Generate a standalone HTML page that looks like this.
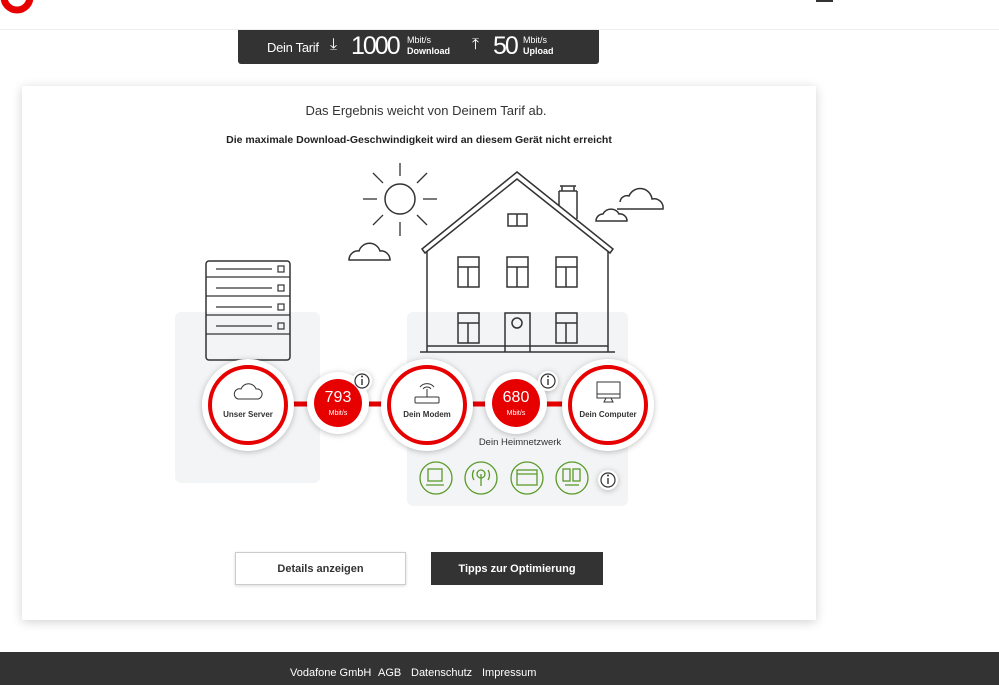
<!DOCTYPE html>
<html><head><meta charset="utf-8"><style>
body{margin:0;width:999px;height:685px;background:#fff;font-family:"Liberation Sans",sans-serif;position:relative;overflow:hidden}
.a{position:absolute}
.i{position:absolute;width:8px;font-size:10px;font-weight:bold;text-align:center;color:#333;font-family:"Liberation Serif",serif}
</style></head><body>
<div class="a" style="left:0;top:29px;width:999px;height:1px;background:#eee"></div>
<svg class="a" style="left:0;top:0" width="40" height="20"><circle cx="17" cy="-3" r="13" fill="none" stroke="#e60000" stroke-width="7"/></svg>
<div class="a" style="left:816px;top:0;width:17px;height:2px;background:#333"></div>
<div class="a" style="left:238px;top:30px;width:361px;height:34px;background:#333;border-radius:0 0 3px 3px;color:#fff">
<span class="a" style="left:29px;top:10px;font-size:13px;letter-spacing:-0.3px">Dein Tarif</span>
<span class="a" style="left:92px;top:6px;font-size:16px">⤓</span>
<span class="a" style="left:113px;top:2px;font-size:25px;letter-spacing:-2px">1000</span>
<span class="a" style="left:169px;top:5px;font-size:9px;line-height:11px">Mbit/s<br><b>Download</b></span>
<span class="a" style="left:234px;top:6px;font-size:16px">⤒</span>
<span class="a" style="left:255px;top:2px;font-size:25px;letter-spacing:-2px">50</span>
<span class="a" style="left:285px;top:5px;font-size:9px;line-height:11px">Mbit/s<br><b>Upload</b></span>
</div>
<div class="a" style="left:22px;top:86px;width:794px;height:534px;background:#fff;box-shadow:0 2px 10px rgba(0,0,0,.18)"></div>
<div class="a" style="left:22px;top:103px;width:808px;text-align:center;font-size:13px;color:#333">Das Ergebnis weicht von Deinem Tarif ab.</div>
<div class="a" style="left:22px;top:134px;width:794px;text-align:center;font-size:10.5px;font-weight:bold;color:#222">Die maximale Download-Geschwindigkeit wird an diesem Gerät nicht erreicht</div>
<div class="a" style="left:175px;top:312px;width:145px;height:171px;background:#f3f4f5;border-radius:6px"></div>
<div class="a" style="left:407px;top:312px;width:221px;height:194px;background:#f3f4f5;border-radius:6px"></div>
<svg class="a" style="left:0;top:0" width="999" height="685" fill="none" stroke="#333" stroke-width="1.5">
<circle cx="400" cy="199" r="15"/>
<g stroke-width="1.3"><line x1="400" y1="163" x2="400" y2="176"/><line x1="400" y1="222" x2="400" y2="236"/><line x1="363" y1="199" x2="377" y2="199"/><line x1="423" y1="199" x2="437" y2="199"/><line x1="373" y1="173" x2="383" y2="183"/><line x1="417" y1="215" x2="427" y2="225"/><line x1="427" y1="173" x2="417" y2="183"/><line x1="383" y1="215" x2="373" y2="225"/></g>
<path d="M349 260h41a9 9 0 0 0-10-9a11 11 0 0 0-21 0a9 9 0 0 0-10 9z"/>
<path d="M596 221h31a7 7 0 0 0-8-7a9 9 0 0 0-16 0a7 7 0 0 0-7 7z"/>
<path d="M617 209h46a9 9 0 0 0-11-10a12 12 0 0 0-23 -3a7 7 0 0 0-9 6"/>
<path d="M422 249L517 172L613 249L610 253L517 179L425 253Z" fill="#fff"/>
<path d="M560 186h16M562 186v5M574 186v5M559 191h18M559 191v15M577 191v28"/>
<path d="M427 252V352M608 252V352M420 352h195M427 346h181"/>
<rect x="508" y="214" width="19" height="12"/><line x1="517" y1="214" x2="517" y2="226"/>
<g><rect x="458" y="257" width="21" height="30"/><path d="M458 267h21M468 267v20"/><rect x="507" y="257" width="21" height="30"/><path d="M507 267h21M517 267v20"/><rect x="556" y="257" width="21" height="30"/><path d="M556 267h21M566 267v20"/>
<rect x="458" y="313" width="21" height="30"/><path d="M458 323h21M468 323v20"/><rect x="556" y="313" width="21" height="30"/><path d="M556 323h21M566 323v20"/>
<path d="M505 352V313h25v39"/><circle cx="517" cy="323" r="5"/></g>
<rect x="206" y="261" width="84" height="99" rx="3"/>
<g stroke-width="1.2"><path d="M206 277h84M206 296h84M206 315h84M206 334h84M216 269h56M216 288h56M216 307h56M216 326h56"/><rect x="278" y="266" width="6" height="6"/><rect x="278" y="285" width="6" height="6"/><rect x="278" y="304" width="6" height="6"/><rect x="278" y="323" width="6" height="6"/></g>
<g stroke="#e60000" stroke-width="5"><line x1="290" y1="404" x2="310" y2="404"/><line x1="366" y1="404" x2="384" y2="404"/><line x1="470" y1="404" x2="488" y2="404"/><line x1="544" y1="404" x2="565" y2="404"/></g>
<g style="filter:drop-shadow(0 1px 3px rgba(0,0,0,.25))" stroke="none" fill="#fff">
<circle cx="248" cy="405" r="46"/><circle cx="338" cy="403" r="31"/><circle cx="427" cy="405" r="46"/><circle cx="516" cy="403" r="31"/><circle cx="608" cy="405" r="46"/>
<circle cx="362" cy="381" r="10"/><circle cx="548" cy="381" r="10"/><circle cx="608" cy="480" r="10"/>
</g>
<g stroke="#e60000" stroke-width="4"><circle cx="248" cy="405" r="38"/><circle cx="427" cy="405" r="38"/><circle cx="608" cy="405" r="38"/></g>
<circle cx="338" cy="403" r="24" fill="#e60000" stroke="none"/><circle cx="516" cy="403" r="24" fill="#e60000" stroke="none"/>
<g stroke-width="1.2"><circle cx="362" cy="381" r="7"/><circle cx="548" cy="381" r="7"/><circle cx="608" cy="480" r="7"/></g>
<g stroke-width="1.4"><path d="M362 379v6M548 379v6M608 478v6"/></g>
<g fill="#333" stroke="none"><circle cx="362" cy="376.5" r="1"/><circle cx="548" cy="376.5" r="1"/><circle cx="608" cy="475.5" r="1"/></g>
<path d="M238 399h20a5 5 0 0 0-2-10a8 8 0 0 0-15 0a5 5 0 0 0-3 10z" stroke-width="1"/>
<g stroke-width="1"><rect x="415" y="397" width="24" height="6" rx="1"/><path d="M427 397v-8M423 389a5 5 0 0 1 8 0M420 387a9 9 0 0 1 14 0"/>
<rect x="597" y="382" width="23" height="16"/><path d="M597 394h23M606 398l-2 4h9l-2-4"/></g>
<g stroke="#5a9a2a" stroke-width="1.3"><circle cx="436" cy="478" r="16"/><circle cx="481" cy="478" r="16"/><circle cx="527" cy="478" r="16"/><circle cx="572" cy="478" r="16"/>
<rect x="428" y="469" width="14" height="12"/><path d="M426 485h18"/><path d="M481 474v12M477 474a4 4 0 1 0 8 0a4 4 0 0 0-8 0M474 470a9 9 0 0 0 0 10M488 470a9 9 0 0 1 0 10"/>
<rect x="517" y="470" width="20" height="15"/><path d="M517 474h20"/><rect x="563" y="469" width="7" height="12"/><rect x="573" y="469" width="7" height="12"/><path d="M565 485h14"/></g>
</svg>
<div class="a" style="left:208px;top:410px;width:80px;text-align:center;font-size:8px;font-weight:bold;color:#333">Unser Server</div>
<div class="a" style="left:387px;top:410px;width:80px;text-align:center;font-size:8px;font-weight:bold;color:#333">Dein Modem</div>
<div class="a" style="left:568px;top:410px;width:80px;text-align:center;font-size:8px;font-weight:bold;color:#333">Dein Computer</div>
<div class="a" style="left:314px;top:389px;width:48px;text-align:center;font-size:16px;color:#fff">793</div>
<div class="a" style="left:314px;top:410px;width:48px;text-align:center;font-size:7px;color:#fff">Mbit/s</div>
<div class="a" style="left:492px;top:389px;width:48px;text-align:center;font-size:16px;color:#fff">680</div>
<div class="a" style="left:492px;top:410px;width:48px;text-align:center;font-size:7px;color:#fff">Mbit/s</div>
<div class="a" style="left:460px;top:437px;width:120px;text-align:center;font-size:9.5px;color:#333">Dein Heimnetzwerk</div>
<div class="a" style="left:235px;top:552px;width:171px;height:33px;border:1px solid #ccc;box-sizing:border-box;box-shadow:0 1px 3px rgba(0,0,0,.15);text-align:center;line-height:33px;font-size:11px;font-weight:bold;color:#333">Details anzeigen</div>
<div class="a" style="left:431px;top:552px;width:172px;height:33px;background:#333;text-align:center;line-height:35px;font-size:11px;font-weight:bold;color:#fff">Tipps zur Optimierung</div>
<div class="a" style="left:0;top:652px;width:999px;height:33px;background:#333;color:#fff;font-size:11px">
<span class="a" style="left:290px;top:15px">Vodafone GmbH</span><span class="a" style="left:378px;top:15px">AGB</span><span class="a" style="left:411px;top:15px">Datenschutz</span><span class="a" style="left:482px;top:15px">Impressum</span></div>
</body></html>
